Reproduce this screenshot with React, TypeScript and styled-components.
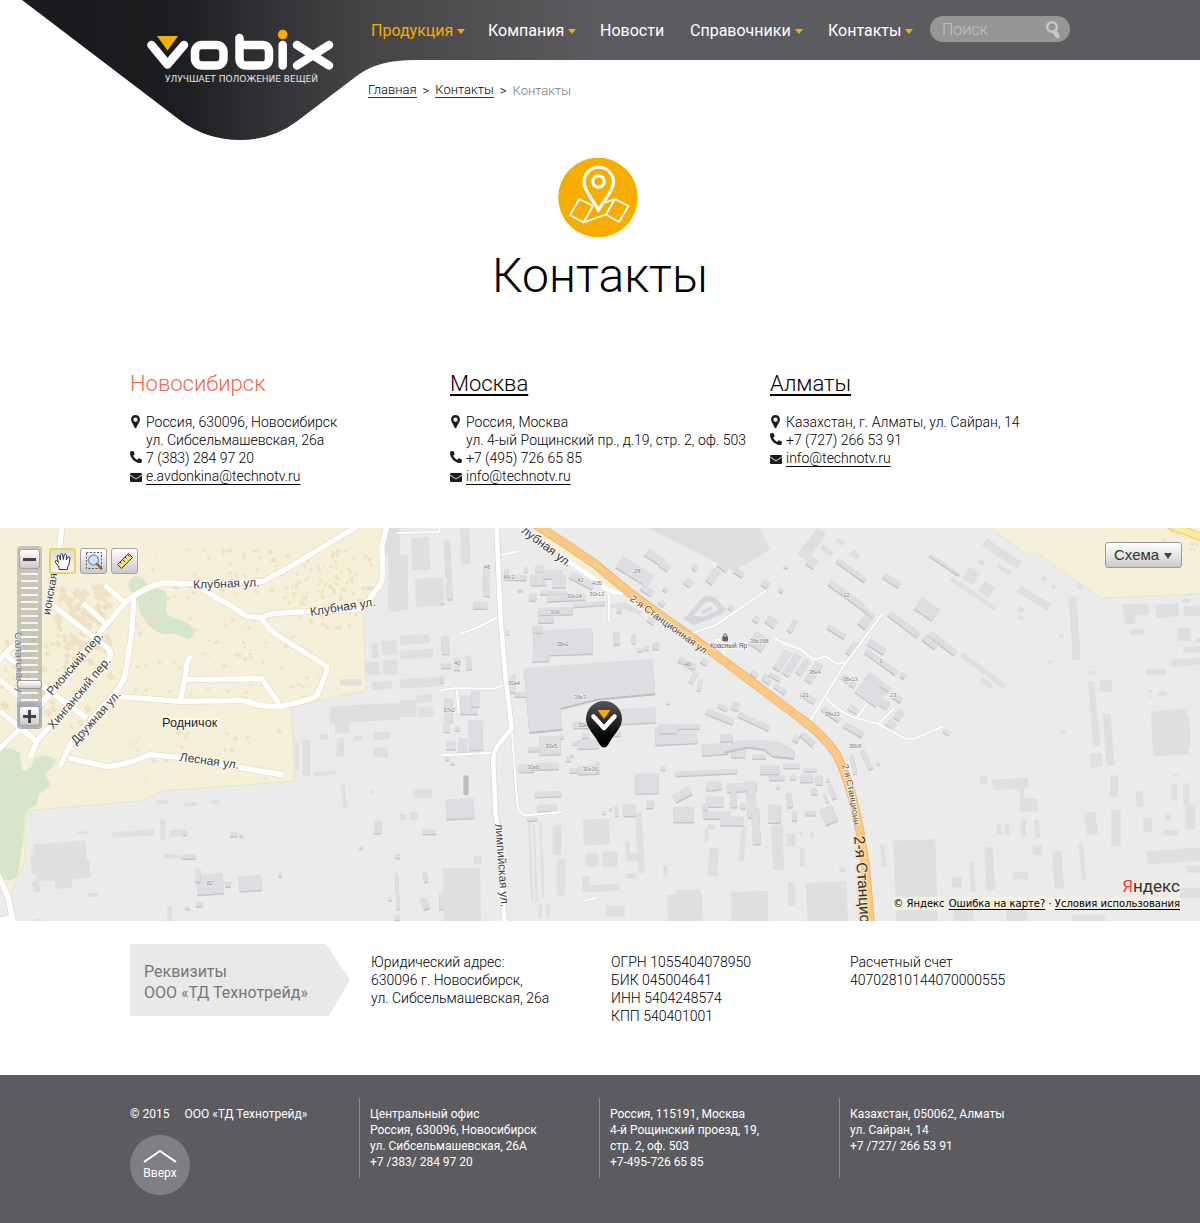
import React from "react";
import styled, { createGlobalStyle } from "styled-components";
import { FaPhoneAlt } from "react-icons/fa";

const GlobalStyle = createGlobalStyle`
  *, *::before, *::after { box-sizing: border-box; }
  body { margin: 0; background: #fff; color: #000; font: 300 14px/18px Roboto, "Liberation Sans", sans-serif; }
  a { color: inherit; text-decoration: none; }
  h1, h2, p, ul, ol { margin: 0; padding: 0; font-weight: inherit; }
  ul, ol { list-style: none; }
  button, input, select { font: inherit; color: inherit; margin: 0; }
`;

const Container = styled.div`
  width: 100%;
  max-width: 940px;
  margin: 0 auto;
`;

/* ---------- header ---------- */

const Header = styled.header`
  position: relative;
  background: linear-gradient(to right, transparent 50%, #5c5b5f 50%) top / 100% 60px no-repeat;
`;

const HeaderShape = styled.svg`
  position: absolute;
  top: 0;
  left: calc(50% - 600px);
  display: block;
`;

const HeaderRow = styled(Container)`
  position: relative;
  display: flex;
  height: 60px;
`;

const LogoLink = styled.a`
  flex: 0 0 241px;
  padding: 28px 0 0 16px;
  height: 60px;
`;

const Nav = styled.nav`
  flex: 1;
  padding-top: 21px;
`;

const NavList = styled.ul`
  display: grid;
  grid-template-columns: 117px 112px 90px 138px auto;
`;

const NavLink = styled.a<{ $active?: boolean }>`
  display: inline-flex;
  align-items: center;
  gap: 4px;
  font-size: 16px;
  font-weight: 400;
  line-height: 20px;
  color: ${(p) => (p.$active ? "#f7ac00" : "#fff")};
`;

const Caret = styled.span`
  border: 4px solid transparent;
  border-top: 5px solid #f7ac00;
  border-bottom: 0;
`;

const SearchForm = styled.form`
  display: flex;
  align-items: center;
  width: 140px;
  height: 26px;
  margin-top: 16px;
  padding: 1px 8px 0 12px;
  border-radius: 13px;
  background: #969696;
`;

const SearchInput = styled.input`
  flex: 1;
  min-width: 0;
  padding: 0;
  border: 0;
  outline: 0;
  background: none;
  font-size: 16px;
  line-height: 20px;
  color: #fff;
  &::placeholder { color: #c2c2c2; opacity: 1; }
`;

const SearchButton = styled.button`
  display: flex;
  padding: 0;
  border: 0;
  background: none;
`;

const Crumbs = styled.ol`
  display: flex;
  gap: 6px;
  padding: 23px 0 0 238px;
  font-size: 13px;
  line-height: 15px;
`;

const CrumbLink = styled.a`
  display: block;
  border-bottom: 1px solid #333;
  line-height: 14px;
`;

const Crumb = styled.li<{ $muted?: boolean }>`
  color: ${(p) => (p.$muted ? "#777" : "#000")};
`;

/* ---------- title and offices ---------- */

const TitleBlock = styled.section`
  display: flex;
  flex-direction: column;
  align-items: center;
  padding-top: 60px;
`;

const TitleIcon = styled.svg`
  display: block;
  margin-right: 4px;
`;

const Title = styled.h1`
  margin-top: 8px;
  font-size: 48px;
  line-height: 60px;
`;

const Offices = styled(Container)`
  display: grid;
  grid-template-columns: repeat(3, 320px);
  padding: 64px 0 43px;
`;

const City = styled.h2<{ $current?: boolean }>`
  margin-bottom: 15px;
  font-size: 22px;
  line-height: 28px;
  color: ${(p) => (p.$current ? "#f0664e" : "#000")};
`;

const CityLink = styled.a`
  text-decoration: underline;
  text-decoration-thickness: 2px;
  text-underline-offset: 3px;
  text-decoration-skip-ink: none;
`;

const ContactRow = styled.p`
  display: grid;
  grid-template-columns: 16px auto;
  line-height: 18px;
`;

const ContactIcon = styled.span`
  display: flex;
  align-items: flex-start;
  padding-top: 2px;
  color: #1b1b20;
`;

const Underlined = styled.a`
  justify-self: start;
  text-decoration: underline;
  text-underline-offset: 3px;
  text-decoration-skip-ink: none;
`;

/* ---------- map ---------- */

const MapBox = styled.section`
  position: relative;
  height: 393px;
  overflow: hidden;
  background: #ebebeb;
`;

const MapSvg = styled.svg`
  display: block;
  width: 100%;
  height: 100%;
  font-family: "Liberation Sans", Arial, sans-serif;
  font-weight: 400;
`;

const Pin = styled.svg`
  position: absolute;
  left: calc(50% - 14px);
  top: 173px;
`;

const ZoomBar = styled.div`
  position: absolute;
  left: 17px;
  top: 18px;
  display: flex;
  flex-direction: column;
  align-items: center;
  justify-content: space-between;
  width: 25px;
  height: 183px;
  padding: 3px 0;
  border-radius: 4px;
  background: linear-gradient(rgba(150, 155, 150, 0.5) 85%, rgba(125, 140, 165, 0.62) 85%);
`;

const ToolButton = styled.button<{ $small?: boolean; $on?: boolean }>`
  display: flex;
  align-items: center;
  justify-content: center;
  width: ${(p) => (p.$small ? 21 : 27)}px;
  height: ${(p) => (p.$small ? 20 : 26)}px;
  padding: 0;
  border: ${(p) => (p.$on ? "2px solid #f2cf63" : "1px solid #a2a2a2")};
  border-radius: 3px;
  background: ${(p) => (p.$on ? "linear-gradient(#dcdcdc, #f8f8f8)" : "linear-gradient(#fff, #c9c9c9)")};
`;

const ZoomRange = styled.input`
  appearance: none;
  writing-mode: vertical-lr;
  width: 25px;
  height: 133px;
  background: repeating-linear-gradient(to bottom, transparent 0 2px, #f4f5f3 2px 4px, transparent 4px 7px) center / 17px 100% no-repeat;
  &::-webkit-slider-thumb {
    appearance: none;
    width: 25px;
    height: 9px;
    border: 1px solid #999;
    border-radius: 3px;
    background: linear-gradient(#fff, #ccc);
  }
`;

const Tools = styled.div`
  position: absolute;
  left: 49px;
  top: 20px;
  display: flex;
  gap: 4px;
`;

const LayerPicker = styled.label`
  position: absolute;
  right: 18px;
  top: 14px;
  display: flex;
  align-items: center;
  width: 77px;
  height: 26px;
  border: 1px solid #999;
  border-radius: 3px;
  background: linear-gradient(#fff, #ccc);
`;

const LayerSelect = styled.select`
  appearance: none;
  width: 100%;
  padding: 0 0 0 8px;
  border: 0;
  outline: 0;
  background: none;
  font: 15px/22px "Liberation Sans", Arial, sans-serif;
  color: #333;
`;

const LayerCaret = styled.span`
  position: absolute;
  right: 9px;
  top: 10px;
  border: 4px solid transparent;
  border-top: 6px solid #444;
  border-bottom: 0;
  pointer-events: none;
`;

const MapCredits = styled.div`
  position: absolute;
  right: 20px;
  bottom: 11px;
  display: flex;
  flex-direction: column;
  align-items: flex-end;
  font: 10px/13px "DejaVu Sans", Verdana, sans-serif;
`;

const Yandex = styled.a`
  font: 400 17px/22px Roboto, "Liberation Sans", sans-serif;
  color: #333;
  text-shadow: 0 0 6px #f7efd0, 0 0 6px #f7efd0;
`;

const RedLetter = styled.span`
  color: #f33;
`;

const CreditLine = styled.p`
  display: flex;
  gap: 4px;
  a { text-decoration: underline; text-underline-offset: 2px; }
`;

const CreditText = styled.span`
  background: #f3f0e4;
`;

/* ---------- requisites and footer ---------- */

const Requisites = styled(Container)`
  display: grid;
  grid-template-columns: 241px 240px 239px auto;
  padding: 23px 0 50px;
`;

const ArrowLabel = styled.h2`
  width: 220px;
  height: 72px;
  padding: 17px 0 0 14px;
  background: #e9e9e9;
  clip-path: polygon(0 0, 196px 0, 220px 36px, 199px 100%, 0 100%);
  font-size: 16px;
  font-weight: 400;
  line-height: 21px;
  color: #777;
`;

const RequisiteText = styled.p`
  padding-top: 9px;
`;

const Footer = styled.footer`
  background: #5c5b5f;
  color: #fff;
  font-size: 12px;
  font-weight: 400;
  line-height: 16px;
`;

const FooterGrid = styled(Container)`
  display: grid;
  grid-template-columns: 229px 240px 240px auto;
  padding: 23px 0 28px;
`;

const FooterColumn = styled.div`
  height: 80px;
  padding: 8px 0 0 10px;
  border-left: 1px solid #8b8a8e;
`;

const Copyright = styled.p`
  display: flex;
  gap: 15px;
  padding-top: 8px;
`;

const UpLink = styled.a`
  display: flex;
  flex-direction: column;
  align-items: center;
  width: 60px;
  height: 60px;
  margin-top: 13px;
  padding-top: 14px;
  border-radius: 50%;
  background: #7f7e82;
`;

/* ---------- map drawing ---------- */

type Box = [number, number, number, number, number?];

const turn = ([x, y, w, h, r = 0]: Box) => (r ? `rotate(${r} ${x + w / 2} ${y + h / 2})` : undefined);

const Flat = ({ items }: { items: Box[] }) => (
  <g fill="#dfdfdf">
    {items.map((b, i) => (
      <rect key={i} x={b[0]} y={b[1]} width={b[2]} height={b[3]} transform={turn(b)} />
    ))}
  </g>
);

const Raised = ({ items }: { items: Box[] }) => (
  <g>
    {items.map((b, i) => (
      <g key={i}>
        <rect x={b[0]} y={b[1] + 4} width={b[2]} height={b[3]} transform={turn(b)} fill="#c2c2c8" />
        <rect x={b[0]} y={b[1]} width={b[2]} height={b[3]} transform={turn(b)} fill="#dddde2" />
      </g>
    ))}
  </g>
);

const westFlat: Box[] = [
  [105, 943, 155, 110, -4], [93, 980, 30, 60], [120, 1000, 150, 55, -4], [98, 1060, 22, 34, -8], [165, 1056, 50, 26, -6],
  [337, 908, 125, 18, -4], [480, 875, 16, 62], [510, 906, 40, 20, -5], [490, 980, 60, 12, 4], [470, 816, 34, 12],
  [552, 824, 38, 12, -6], [634, 816, 24, 12], [262, 1095, 32, 12], [232, 910, 28, 8], [502, 1136, 14, 43], [1020, 454, 66, 18],
  [1115, 346, 20, 44, -5], [1145, 338, 46, 42, -5], [1095, 402, 44, 38, -5], [1148, 395, 44, 44, -5], [1115, 460, 60, 24, -4],
  [990, 530, 210, 50, -3], [1005, 570, 45, 46], [1120, 612, 50, 22, -4], [1010, 630, 22, 56], [1122, 658, 42, 30],
  [908, 636, 22, 108], [884, 645, 12, 80], [944, 730, 66, 12, -4], [1026, 770, 12, 70, -6], [1150, 0, 50, 80], [1165, 60, 35, 190],
  [1100, 175, 20, 12], [960, 620, 24, 14], [1062, 625, 24, 14], [1112, 786, 10, 12], [103, 1172, 22, 8],
];
const westRaised: Box[] = [
  [590, 1038, 80, 60, -4], [585, 1022, 16, 40], [676, 1060, 16, 16], [716, 1042, 68, 46, -4], [548, 978, 38, 14], [690, 911, 22, 14],
  [718, 918, 11, 8], [548, 903, 12, 18], [836, 1030, 10, 16], [588, 1123, 20, 12], [556, 1135, 14, 8], [1122, 878, 22, 38],
  [1184, 978, 16, 12], [1078, 954, 10, 8], [1187, 1034, 10, 110, -3], [1164, 1107, 12, 10], [1182, 1160, 18, 16],
];
const midFlat: Box[] = [
  [35, 28, 54, 98, -2], [46, 150, 86, 85, -3], [182, 0, 28, 108, -2], [0, 80, 24, 164], [0, 320, 90, 28, -4], [0, 365, 100, 26, -3],
  [0, 450, 125, 28, -3], [0, 515, 50, 52], [50, 500, 46, 24], [55, 535, 45, 32], [40, 784, 56, 28], [130, 1020, 112, 160, -1],
  [222, 984, 24, 24], [30, 853, 22, 22], [0, 858, 18, 18], [388, 880, 8, 238, -2], [402, 890, 7, 230, -2], [422, 880, 7, 230, -2],
  [458, 890, 26, 90], [472, 992, 24, 110], [550, 873, 78, 78, -2], [556, 975, 40, 40], [608, 970, 44, 46], [560, 1070, 98, 20, -3],
  [548, 1045, 20, 44], [710, 855, 20, 180, -3], [676, 940, 14, 44], [680, 975, 34, 24], [680, 1036, 30, 16], [802, 1098, 105, 82, -3],
  [830, 1084, 70, 16], [994, 1090, 110, 90, -1], [914, 898, 10, 44], [922, 890, 24, 16], [926, 960, 28, 84, 4], [1020, 892, 16, 110, 6],
  [1060, 840, 18, 110], [1116, 890, 34, 136, -2], [618, 1132, 56, 34], [1164, 1064, 20, 70], [1160, 916, 26, 40], [886, 20, 60, 14, 36],
  [848, 20, 50, 14, 36], [830, 34, 60, 14, 36], [880, 60, 60, 14, 36], [416, 1126, 10, 44], [440, 1130, 8, 36], [790, 1012, 12, 34],
];
const midRaised: Box[] = [
  [136, 38, 18, 176, -3], [250, 110, 20, 94], [220, 222, 42, 20], [124, 324, 24, 54, -3], [124, 404, 30, 16], [162, 390, 18, 36],
  [198, 382, 16, 42, -4], [122, 442, 10, 22], [122, 220, 9, 8], [180, 502, 54, 56], [214, 488, 24, 48], [132, 510, 26, 72], [206, 576, 42, 90, -2],
  [174, 630, 28, 44], [138, 640, 28, 24], [130, 582, 20, 30], [165, 596, 14, 12], [138, 812, 84, 60, -2], [68, 904, 40, 14], [70, 1032, 12, 30, -10],
  [64, 1110, 20, 34, -20], [118, 1094, 12, 50], [136, 686, 12, 10], [150, 700, 14, 10], [312, 124, 14, 30], [325, 140, 54, 16],
  [354, 182, 14, 8], [388, 196, 22, 22, 6], [372, 116, 10, 16], [392, 140, 46, 32], [406, 112, 24, 20], [430, 124, 55, 28], [456, 140, 42, 38],
  [420, 188, 80, 12], [440, 200, 116, 18, -2], [520, 222, 95, 12, -4], [414, 238, 104, 22, -2], [415, 266, 46, 18], [508, 148, 78, 20, 28],
  [318, 306, 10, 14], [400, 304, 178, 76, -2], [398, 292, 30, 22], [396, 380, 52, 20, -2], [640, 310, 18, 40, -3], [694, 318, 12, 28], [712, 360, 16, 10],
  [732, 352, 14, 14], [758, 342, 18, 22], [332, 440, 16, 54], [344, 492, 34, 14], [520, 580, 46, 20], [546, 616, 24, 14],
  [532, 634, 64, 28, -2], [518, 640, 14, 10], [640, 610, 22, 14], [418, 624, 64, 56, -2], [384, 656, 34, 14], [480, 620, 10, 12], [356, 710, 46, 22],
  [392, 704, 84, 20, -2], [508, 720, 26, 14], [534, 712, 64, 26, -2], [588, 700, 8, 30], [498, 684, 14, 16], [512, 678, 10, 8], [404, 790, 80, 16, -2],
  [412, 830, 58, 20, -2], [382, 868, 30, 10], [706, 736, 70, 60, -1], [782, 714, 14, 12], [738, 818, 22, 22], [670, 828, 36, 36], [644, 834, 10, 30, -6],
  [606, 850, 10, 8], [628, 840, 8, 6], [660, 540, 106, 34, -3], [660, 572, 108, 14, -3], [765, 596, 126, 52, -3], [776, 588, 56, 28],
  [836, 588, 64, 14], [905, 646, 78, 34, -4], [960, 618, 38, 22], [994, 664, 42, 24], [1056, 680, 42, 12], [826, 726, 184, 14, -3],
  [1080, 712, 58, 26], [1150, 706, 50, 14], [1108, 742, 46, 14], [1170, 740, 18, 14], [1130, 770, 8, 12], [1160, 794, 16, 44, -6], [1176, 848, 14, 30],
  [918, 760, 46, 26, -6], [918, 806, 52, 30], [980, 764, 90, 26, -3], [992, 780, 18, 58], [1040, 758, 28, 110, -3], [818, 786, 56, 26, -28], [820, 836, 62, 46],
  [910, 850, 78, 22], [960, 866, 70, 26], [908, 826, 16, 20], [1022, 824, 14, 18], [1104, 830, 38, 54], [1056, 850, 24, 98, -3],
  [650, 110, 110, 40, 32], [736, 76, 60, 24, 32], [780, 104, 30, 20, 32], [722, 178, 40, 18, 32], [776, 218, 20, 14, 32],
  [744, 270, 22, 16, 36], [652, 240, 14, 14, 20], [790, 178, 14, 12, 32], [878, 110, 16, 16, 36], [856, 152, 22, 22, 36], [928, 122, 24, 46, 34], [952, 110, 34, 14, 36],
  [1002, 126, 32, 16, 32], [1088, 158, 20, 20, 32], [1150, 112, 14, 8], [1138, 180, 12, 12, 30], [986, 232, 14, 14, 30], [1060, 266, 18, 16, 32],
  [1100, 268, 32, 26, 36], [1170, 274, 16, 40, 32], [1054, 318, 46, 44, 32], [1136, 364, 24, 66, 34], [1164, 374, 24, 72, 34],
  [834, 398, 56, 16, 28], [904, 394, 22, 16, 32], [874, 430, 16, 36, 28], [894, 454, 12, 34, 12], [800, 520, 10, 8], [1052, 430, 24, 14, 34],
  [1090, 440, 20, 14, 34], [1106, 440, 40, 12, 34], [1088, 450, 28, 14, 34], [1122, 476, 40, 14, 34], [916, 556, 88, 18, 22], [954, 530, 30, 14, 26],
  [996, 522, 24, 24, 20], [1012, 572, 102, 16, 25], [1182, 620, 18, 22, 30],
];
const eastFlat: Box[] = [
  [18, 0, 34, 100, 36], [60, 60, 40, 16, 36], [108, 34, 26, 14, 32], [152, 70, 26, 20, 36], [542, 64, 128, 26, 34], [590, 118, 44, 14, 34],
  [495, 122, 38, 42, 36], [535, 96, 18, 14, 30], [540, 166, 38, 36, 36], [648, 198, 106, 24, 32], [724, 146, 16, 14, 30], [755, 170, 12, 12, 30],
  [834, 170, 14, 14, 30], [654, 236, 18, 18, 30], [654, 264, 16, 12, 30], [440, 190, 160, 14, 34], [812, 206, 24, 190, -4], [778, 320, 10, 10],
  [968, 228, 78, 34, -2], [976, 260, 30, 28], [988, 304, 46, 16, -4], [1068, 228, 68, 40, -3], [1152, 234, 48, 30, -3], [1146, 212, 24, 12],
  [1132, 300, 40, 40], [1188, 330, 12, 14], [1150, 356, 50, 18], [1114, 392, 86, 22, -4], [1038, 424, 60, 16], [864, 428, 22, 12], [872, 460, 20, 192, -5],
  [900, 456, 36, 34, 4], [914, 558, 24, 156, -4], [1056, 546, 108, 136, -3], [1100, 570, 70, 90, -3], [870, 676, 36, 42, -3], [782, 608, 14, 8],
  [744, 398, 12, 8], [1075, 492, 26, 10], [1044, 486, 10, 8], [1046, 502, 8, 6], [470, 420, 160, 16, 37], [540, 456, 38, 18, 37], [930, 742, 24, 66],
  [540, 744, 22, 24], [578, 752, 106, 32, -3], [660, 780, 12, 70], [664, 812, 48, 38], [590, 888, 14, 32, -4], [614, 888, 14, 32, -6], [664, 872, 14, 54],
  [704, 876, 14, 54, -4], [856, 852, 34, 68, -8], [934, 844, 28, 112], [1008, 790, 22, 46, -4], [1114, 768, 18, 46], [1150, 766, 18, 64], [1156, 830, 30, 74],
  [1030, 870, 26, 42, -6], [1098, 858, 12, 22], [1090, 906, 44, 16], [1120, 738, 14, 8], [698, 952, 28, 28], [556, 956, 26, 132, -3], [640, 1032, 44, 22, -3],
  [760, 970, 28, 112, -4], [840, 946, 14, 112, -5], [510, 1002, 14, 90, -4], [456, 1048, 30, 30], [1040, 964, 160, 40, -4], [1160, 1012, 40, 22], [1140, 1080, 60, 30],
  [284, 936, 126, 245, -2], [242, 950, 14, 66, -4], [118, 1018, 18, 14], [20, 1062, 122, 120, -2], [0, 960, 14, 56], [30, 910, 10, 20], [0, 910, 6, 16],
  [460, 1120, 60, 60], [816, 1160, 100, 19], [620, 1130, 60, 50],
];
const eastRaised: Box[] = [
  [24, 88, 26, 30, 34], [102, 120, 106, 14, 36], [78, 190, 122, 18, 36], [182, 246, 46, 12, 40], [182, 264, 28, 36, 38], [248, 148, 56, 18, 32],
  [350, 222, 64, 42, 34], [258, 280, 110, 18, 37], [378, 336, 100, 18, 37], [368, 334, 46, 18, 37], [380, 106, 108, 8, 34], [80, 304, 60, 14, 32],
  [148, 340, 18, 42, 34], [202, 346, 58, 20, 32], [188, 394, 114, 16, 36], [302, 436, 16, 14, 30], [180, 448, 78, 74, 36], [240, 470, 34, 14, 36],
  [280, 502, 28, 16, 34], [242, 516, 26, 24, 34], [30, 400, 24, 66, 34], [126, 446, 24, 14, 40], [150, 460, 18, 16, 34], [0, 500, 50, 16, 34], [62, 552, 64, 14, 36],
  [146, 534, 30, 18, 30], [130, 596, 64, 18, 30], [288, 546, 20, 30, 34], [262, 576, 24, 24, 40], [430, 606, 22, 12, 32], [154, 680, 12, 58, -10],
  [190, 662, 16, 64, -26], [232, 702, 10, 8, 30], [0, 624, 50, 18, 42], [10, 720, 40, 10], [0, 738, 40, 24], [46, 742, 22, 28], [78, 750, 12, 10],
  [34, 780, 18, 20], [72, 796, 10, 28, -20], [88, 768, 14, 46, -20], [16, 848, 30, 14], [66, 836, 40, 50, -22], [0, 392, 20, 50, 36],
];

/* small deterministic generator for garden houses */
const makeHouses = (count: number, x0: number, y0: number, w: number, h: number, size: number, angle: number, seed: number): Box[] => {
  let s = seed;
  const next = () => {
    s = (s * 16807) % 2147483647;
    return s / 2147483647;
  };
  return Array.from({ length: count }, () => {
    const a = size * (0.6 + next() * 0.8);
    return [x0 + next() * w, y0 + next() * h, a, a * 0.8, angle + next() * 10] as Box;
  });
};

const houses: Box[] = [
  ...makeHouses(90, 160, 170, 160, 180, 17, 40, 11),
  ...makeHouses(80, 0, 320, 330, 280, 16, 40, 29),
  ...makeHouses(80, 450, 60, 600, 150, 10, 10, 47),
  ...makeHouses(60, 850, 60, 280, 240, 10, 70, 71),
  ...makeHouses(70, 400, 260, 600, 250, 10, 10, 83),
  ...makeHouses(22, 380, 590, 480, 180, 11, 30, 97),
  ...makeHouses(24, 3400, 0, 200, 70, 10, 20, 13),
];

const streets = [
  "M186 -5L178 60L160 150",
  "M1080 -10L960 62L860 122L790 160L620 168L490 165Q450 172 400 205Q375 220 320 290L120 530",
  "M400 200Q402 260 390 350L375 440Q365 475 340 500L215 640L180 715",
  "M610 185Q640 205 680 225L740 265L785 270Q800 300 830 320L980 415Q985 425 950 505Q900 525 840 535Q800 537 770 530Q740 515 700 518L540 520L350 505",
  "M785 270Q800 258 830 256L930 250L1088 244L1125 190Q1145 170 1148 140L1146 50L1160 -5",
  "M540 520L555 450L562 400L573 382M560 455L785 452L838 528",
  "M315 172L375 225M248 225L318 287M155 230L320 358Q340 375 325 395L110 640L90 690",
  "M0 455L60 508M130 475L260 570M0 550L110 640M-5 400L70 320M10 375L60 415M-5 665L58 605M95 560L180 465",
  "M205 690L320 716Q375 712 450 680L540 688L850 741",
  "M-5 1040L25 1110L40 1190M-5 1178L40 1168",
];
const avenues = "M1490 -5L1495 120L1502 280L1518 460L1535 600L1492 655Q1478 675 1480 710L1487 860L1493 900L1514 1190";
const lanes = [
  "M1535 600L1552 830Q1556 862 1580 862L1685 852",
  "M1382 317L1430 300L1498 265M1322 487L1370 480L1480 482L1518 470M1370 484L1377 560M1324 682L1480 674M1504 80L1556 70",
  "M2070 318L2150 290L2300 186M2130 360L2150 335L2170 340L2172 390M2325 330Q2340 345 2400 362L2442 395L2478 385L2510 408L2540 402",
  "M2646 258L2530 415L2475 505L2430 580M2475 505Q2500 540 2560 568L2635 588L2715 632L2745 632L2830 595M2570 570L2600 530M2635 588L2685 538",
  "M1826 196L1827 280M1190 15L1316 12L1320 -5M1750 1118L1790 1110",
];
const highway = "M1600 -15L1700 50L1785 108L1890 195L2000 275L2120 360L2300 495L2400 570Q2470 620 2510 680Q2540 740 2560 820L2580 910L2596 1010L2612 1190";

type Label = { t: string; x: number; y: number; r?: number; s?: number; c?: string };
const labels: Label[] = [
  { t: "Клубная ул.", x: 580, y: 182, r: -2 },
  { t: "Клубная ул.", x: 932, y: 264, r: -9 },
  { t: "Рионский пер.", x: 156, y: 504, r: -49 },
  { t: "Хинганский пер.", x: 160, y: 606, r: -50 },
  { t: "Дружная ул.", x: 228, y: 652, r: -48 },
  { t: "Лесная ул.", x: 538, y: 698, r: 8 },
  { t: "ионская", x: 150, y: 262, r: -80, s: 34 },
  { t: "Салатская у", x: 44, y: 312, r: 88, s: 32, c: "#667" },
  { t: "лубная ул.", x: 1562, y: 12, r: 37 },
  { t: "2-я Станционная ул.", x: 1888, y: 216, r: 36, s: 30, c: "#554a3c" },
  { t: "лимпийская ул.", x: 1486, y: 888, r: 86, s: 35 },
];
const tiny: [string, number, number][] = [
  ["46", 1452, 122], ["46/1", 1510, 154], ["30к14", 1700, 210], ["30к12", 1768, 205], ["30А", 1650, 258], ["38к2", 1670, 354],
  ["38к3", 1722, 512], ["30к4", 1524, 470], ["37к2", 1330, 552], ["30к5", 1636, 660], ["30к6", 1582, 722], ["30к16", 1748, 730],
  ["28", 1902, 136], ["42", 1732, 162], ["40Б", 1776, 172], ["40", 1362, 410], ["40", 2054, 415], ["38к16В", 2250, 344], ["12", 2530, 208],
  ["1", 2638, 404], ["38к4", 2426, 438], ["38к13", 2528, 460], ["23", 2670, 506], ["21", 2408, 508], ["38к10", 2474, 565], ["38К8", 2546, 661],
  ["82", 620, 1070], ["30к", 1734, 596],
];

const bigHall = "M388 612L372 420L758 392L766 496L592 512L482 540L487 602Z";

const MapDrawing = () => (
  <MapSvg viewBox="0 0 3600 1179" preserveAspectRatio="xMidYMid slice" role="img" aria-label="Схема проезда">
    <defs>
      <clipPath id="town">
        <path d="M0 0H1150L1138 160L1090 240L1098 487L875 535L883 760L490 788L75 848L0 660ZM3400 0H3600V70H3490Z" />
      </clipPath>
      <path id="station" d="M2526 712Q2550 790 2562 905" />
      <path id="stationBig" d="M2562 926Q2574 1040 2584 1260" />
    </defs>
    <rect width="3600" height="1179" fill="#ebebeb" />
    <g fill="#f7f0d9" stroke="#e2dcc6" strokeWidth="2">
      <path d="M-5 -5H1160L1138 160L1090 240L1098 487L875 535L883 760L490 788L425 818L75 848V1000L30 1105L-5 1010Z" />
      <path d="M2965 -5L3078 77L3110 75L3305 210L3605 197V-5Z" />
      <path d="M1610 -5L1700 50L1785 108L1870 190L1830 188L1700 98L1590 20Z" />
    </g>
    <g fill="#d5e6cd">
      <path d="M0 658Q50 660 62 680Q58 720 75 730Q95 725 105 690Q140 675 168 695Q165 715 135 740L150 770Q140 785 115 800L110 830L75 850L70 940L52 1045Q35 1065 0 1050Z" />
      <path d="M385 175Q385 145 412 144Q435 150 445 178Q500 180 503 210L498 250Q510 275 530 272Q580 285 585 312Q575 338 560 333Q530 312 500 320Q470 318 440 285Q415 255 415 225Z" />
    </g>
    <path d="M462 268L482 262L480 285L466 280Z" fill="#ecdfc8" />
    <g clipPath="url(#town)" fill="#efe1c3">
      {houses.map((b, i) => (
        <rect key={i} x={b[0]} y={b[1]} width={b[2]} height={b[3]} transform={turn(b)} />
      ))}
    </g>
    <Flat items={westFlat} />
    <Raised items={westRaised} />
    <g transform="translate(1200 0)">
      <path d="M745 0L1000 130L1110 65L1080 0Z" fill="#dfdfdf" />
      <Flat items={midFlat} />
      <Raised items={midRaised} />
      <path d={bigHall} transform="translate(0 6)" fill="#bdbdc4" />
      <path d={bigHall} fill="#dddde2" />
      <path d="M852 272L912 205L945 207L978 245L960 262L880 292Z M880 262L912 266L955 244L935 222L915 224Z" fill="#d6d6dc" fillRule="evenodd" />
      <path d="M902 250L935 235L940 244L908 258Z" fill="#d6d6dc" />
      <path d="M632 230L670 222L724 250L724 264L676 244L632 240Z" fill="#dddde2" />
      <path d="M970 678L1000 646L1060 640L1140 648L1185 674L1182 696L1120 690L1090 668L1040 662Z" fill="#c2c2c8" />
      <path d="M970 672L1000 640L1060 634L1140 642L1185 668L1182 690L1120 684L1090 662L1040 656Z" fill="#dddde2" />
      <rect x="190" y="742" width="16" height="60" rx="7" fill="#bdbdc4" />
    </g>
    <g transform="translate(2400 0)">
      <Flat items={eastFlat} />
      <Raised items={eastRaised} />
    </g>
    <g fill="none" strokeLinejoin="round">
      {lanes.map((d) => <path key={d} d={d} stroke="#dadada" strokeWidth="9" />)}
      {lanes.map((d) => <path key={d} d={d} stroke="#fff" strokeWidth="6" />)}
      {streets.map((d) => <path key={d} d={d} stroke="#e3dccb" strokeWidth="20" />)}
      {streets.map((d) => <path key={d} d={d} stroke="#fff" strokeWidth="16" />)}
      <path d="M1690 90L1800 165Q1830 200 1870 192" stroke="#fff" strokeWidth="12" />
      <path d={avenues} stroke="#d6d6d6" strokeWidth="18" />
      <path d={avenues} stroke="#fff" strokeWidth="14" />
      <path d={highway} stroke="#e3b579" strokeWidth="27" />
      <path d={highway} stroke="#fdc881" strokeWidth="22" />
      <path d="M3505 -10L3610 30" stroke="#e2c96a" strokeWidth="24" />
      <path d="M3505 -10L3610 30" stroke="#ffec97" strokeWidth="19" />
    </g>
    <g paintOrder="stroke" stroke="#fff" strokeOpacity="0.8" strokeWidth="5">
      {tiny.map(([t, x, y]) => (
        <text key={`${t}${x}`} x={x} y={y} fontSize="17" fill="#77776c" strokeWidth="3">{t}</text>
      ))}
      {labels.map((l) => (
        <text key={`${l.t}${l.x}`} x={l.x} y={l.y} fontSize={l.s ?? 36} fill={l.c ?? "#3a3a3a"} transform={`rotate(${l.r ?? 0} ${l.x} ${l.y})`}>
          {l.t}
        </text>
      ))}
      <text x="486" y="597" fontSize="38" fill="#1c1c1c" strokeWidth="8">Родничок</text>
      <text x="2130" y="360" fontSize="20" fill="#554a48">Красный Яр</text>
      <text fontSize="27" fill="#554a3c"><textPath href="#station">2-я Станционн</textPath></text>
      <text fontSize="46" fill="#333" stroke="#fbe3bb" strokeWidth="8"><textPath href="#stationBig">2-я Станцио</textPath></text>
    </g>
    <rect x="2167" y="325" width="17" height="15" rx="2" fill="#6b5a52" />
    <path d="M2171 326v-4a4 4 0 0 1 9 0v4" fill="none" stroke="#6b5a52" strokeWidth="3" />
  </MapSvg>
);

/* ---------- small drawings ---------- */

const LogoDrawing = () => (
  <svg width="190" height="60" viewBox="146 28 190 60" role="img" aria-label="Vobix">
    <g fill="none" stroke="#fff" strokeWidth="8.500" strokeLinecap="round" strokeLinejoin="round">
      <path d="M151.500 45L167.500 64.500L184 45" />
      <rect x="195" y="45" width="28.500" height="20.500" rx="7" />
      <path d="M239.500 38V58.500Q239.500 65.500 246.500 65.500H262Q269 65.500 269 58.500V52Q269 45 262 45H240" />
      <path d="M282.700 45V65.500M297 45L329 65.500M329 45L297 65.500" />
    </g>
    <path d="M157 36H178L167.500 50.500Z" fill="#f7ac00" />
    <circle cx="282.700" cy="34.500" r="4.800" fill="#f7ac00" />
    <text x="165" y="82" fontFamily="DejaVu Sans, Verdana, sans-serif" fontSize="9" fontWeight="400" fill="#e8e8e8">УЛУЧШАЕТ ПОЛОЖЕНИЕ ВЕЩЕЙ</text>
  </svg>
);

const PinIcon = () => (
  <svg width="11" height="14" viewBox="0 0 11 14" aria-hidden="true">
    <path d="M5.500 0A4.500 4.500 0 0 0 1 4.500C1 7 3.500 9 4.500 12.500Q5.500 14 6.500 12.500C7.500 9 10 7 10 4.500A4.500 4.500 0 0 0 5.500 0Zm0 2.400a2.200 2.200 0 1 1 0 4.400 2.200 2.200 0 0 1 0-4.400Z" fill="currentColor" fillRule="evenodd" />
  </svg>
);

const MailIcon = () => (
  <svg width="12" height="14" viewBox="0 0 12 14" aria-hidden="true">
    <rect y="4" width="12" height="9" rx="1" fill="currentColor" />
    <path d="M0 6L6 10L12 6" fill="none" stroke="#fff" strokeWidth="0.900" />
  </svg>
);

const navItems = [
  { text: "Продукция", menu: true, active: true },
  { text: "Компания", menu: true },
  { text: "Новости" },
  { text: "Справочники", menu: true },
  { text: "Контакты", menu: true },
];

const offices = [
  { city: "Новосибирск", current: true, address: ["Россия, 630096, Новосибирск", "ул. Сибсельмашевская, 26а"], phone: "7 (383) 284 97 20", mail: "e.avdonkina@technotv.ru" },
  { city: "Москва", address: ["Россия, Москва", "ул. 4-ый Рощинский пр., д.19, стр. 2, оф. 503"], phone: "+7 (495) 726 65 85", mail: "info@technotv.ru" },
  { city: "Алматы", address: ["Казахстан, г. Алматы, ул. Сайран, 14"], phone: "+7 (727) 266 53 91", mail: "info@technotv.ru" },
];

const requisites = [
  ["Юридический адрес:", "630096 г. Новосибирск,", "ул. Сибсельмашевская, 26а"],
  ["ОГРН 1055404078950", "БИК 045004641", "ИНН 5404248574", "КПП 540401001"],
  ["Расчетный счет", "40702810144070000555"],
];

const footerColumns = [
  ["Центральный офис", "Россия, 630096, Новосибирск", "ул. Сибсельмашевская, 26А", "+7 /383/ 284 97 20"],
  ["Россия, 115191, Москва", "4-й Рощинский проезд, 19,", "стр. 2, оф. 503", "+7-495-726 65 85"],
  ["Казахстан, 050062, Алматы", "ул. Сайран, 14", "+7 /727/ 266 53 91"],
];

const Lines = ({ items }: { items: string[] }) => (
  <>
    {items.map((line, i) => (
      <React.Fragment key={line}>
        {i > 0 && <br />}
        {line}
      </React.Fragment>
    ))}
  </>
);

export default function App() {
  return (
    <>
      <GlobalStyle />
      <Header id="top">
        <HeaderShape width="600" height="140" viewBox="0 0 600 140" aria-hidden="true">
          <defs>
            <linearGradient id="shade" gradientUnits="userSpaceOnUse" x1="0" y1="0" x2="600" y2="0">
              <stop offset="0.140" stopColor="#1b1a1e" />
              <stop offset="0.300" stopColor="#1d1e21" />
              <stop offset="0.470" stopColor="#363439" />
              <stop offset="0.600" stopColor="#464344" />
              <stop offset="1" stopColor="#5c5b5f" />
            </linearGradient>
          </defs>
          <path d="M22 0H600V60H415Q378 60 358 75L296 122Q272 140 240 140Q207 140 181 121Z" fill="url(#shade)" />
        </HeaderShape>
        <HeaderRow>
          <LogoLink href="#top"><LogoDrawing /></LogoLink>
          <Nav>
            <NavList>
              {navItems.map((item) => (
                <li key={item.text}>
                  <NavLink href="#" $active={item.active}>
                    {item.text}
                    {item.menu && <Caret />}
                  </NavLink>
                </li>
              ))}
            </NavList>
          </Nav>
          <SearchForm>
            <SearchInput type="search" placeholder="Поиск" aria-label="Поиск" />
            <SearchButton type="button" aria-label="Найти">
              <svg width="18" height="20" viewBox="0 0 18 20">
                <circle cx="8" cy="7" r="4.800" fill="none" stroke="#c6c8ca" strokeWidth="2.400" />
                <path d="M11 12L13.500 16" stroke="#c6c8ca" strokeWidth="4.500" strokeLinecap="round" />
              </svg>
            </SearchButton>
          </SearchForm>
        </HeaderRow>
      </Header>
      <Container as="nav" aria-label="Навигация">
        <Crumbs>
          <Crumb><CrumbLink href="#">Главная</CrumbLink></Crumb>
          <Crumb aria-hidden="true">&gt;</Crumb>
          <Crumb><CrumbLink href="#">Контакты</CrumbLink></Crumb>
          <Crumb aria-hidden="true">&gt;</Crumb>
          <Crumb $muted>Контакты</Crumb>
        </Crumbs>
      </Container>
      <main>
        <TitleBlock>
          <TitleIcon width="80" height="80" viewBox="0 0 80 80" aria-hidden="true">
            <circle cx="40" cy="39.500" r="39.800" fill="#f7ac00" />
            <g fill="none" stroke="#fff" strokeLinejoin="round">
              <path d="M35 48L21.500 41L12 57L25.500 64.500L35 48M25.500 64.500L48 56.500L57 41L45.500 45M57 41L70.500 48L61 64L48 56.500" strokeWidth="1.800" />
              <path d="M40.500 52.500C37 44 26 34 26 24A14.700 14.700 0 0 1 55.500 24C55.500 34 44 44 40.500 52.500Z" strokeWidth="3.200" fill="#f7ac00" />
              <circle cx="40.500" cy="23.500" r="5.700" strokeWidth="3.200" />
            </g>
          </TitleIcon>
          <Title>Контакты</Title>
        </TitleBlock>
        <Offices>
          {offices.map((o) => (
            <section key={o.city}>
              <City $current={o.current}>{o.current ? o.city : <CityLink href="#">{o.city}</CityLink>}</City>
              <ContactRow>
                <ContactIcon><PinIcon /></ContactIcon>
                <span><Lines items={o.address} /></span>
              </ContactRow>
              <ContactRow>
                <ContactIcon><FaPhoneAlt size={12} /></ContactIcon>
                <span>{o.phone}</span>
              </ContactRow>
              <ContactRow>
                <ContactIcon><MailIcon /></ContactIcon>
                <Underlined href={`mailto:${o.mail}`}>{o.mail}</Underlined>
              </ContactRow>
            </section>
          ))}
        </Offices>
        <MapBox>
          <MapDrawing />
          <Pin width="36" height="47" viewBox="0 0 36 47" aria-hidden="true">
            <defs>
              <linearGradient id="pin" x1="0" y1="0" x2="0" y2="1">
                <stop offset="0" stopColor="#56555a" />
                <stop offset="0.700" stopColor="#0b0b0c" />
                <stop offset="1" stopColor="#000" />
              </linearGradient>
            </defs>
            <path d="M18 0A18 18 0 0 0 0 18C0 27 9 34 14 44Q18 49 22 44C27 34 36 27 36 18A18 18 0 0 0 18 0Z" fill="url(#pin)" />
            <path d="M7.500 15.500L18 27L28.500 15.500" fill="none" stroke="#fff" strokeWidth="4.600" strokeLinecap="round" strokeLinejoin="round" />
            <path d="M11.500 9H24.500L18 18Z" fill="#f7ac00" />
          </Pin>
          <ZoomBar>
            <ToolButton type="button" $small aria-label="Отдалить">
              <svg width="13" height="13" viewBox="0 0 13 13"><path d="M0 6.500H13" stroke="#444" strokeWidth="3" /></svg>
            </ToolButton>
            <ZoomRange type="range" min="0" max="17" defaultValue="15" aria-label="Масштаб" />
            <ToolButton type="button" $small aria-label="Приблизить">
              <svg width="13" height="13" viewBox="0 0 13 13"><path d="M0 6.500H13M6.500 0V13" stroke="#444" strokeWidth="3" /></svg>
            </ToolButton>
          </ZoomBar>
          <Tools>
            <ToolButton type="button" $on aria-label="Переместить карту">
              <svg width="18" height="19" viewBox="0 0 18 19">
                <path d="M5 17.500V15L1.500 10.500Q.5 8.500 2.500 8.500L4.500 10.500L3 5Q3 3 4.800 3.500L6.500 8L6.300 2.500Q7 .8 8.500 2L9.300 7.500L10.300 2.500Q11.500 1.200 12.500 3L12.200 8L14 5Q15.700 4.200 16 6L15 12L13.500 15.500V17.500Z" fill="#fff" stroke="#333" strokeLinejoin="round" />
              </svg>
            </ToolButton>
            <ToolButton type="button" aria-label="Выделить область">
              <svg width="20" height="20" viewBox="0 0 20 20">
                <rect x="2.500" y="1.500" width="15" height="16" fill="none" stroke="#555" strokeDasharray="2 1.500" />
                <circle cx="9.500" cy="9" r="5" fill="#cfe4fa" stroke="#7f9fc4" strokeWidth="1.500" />
                <path d="M13 13L17.500 17.500" stroke="#8b6a3c" strokeWidth="2.500" strokeLinecap="round" />
              </svg>
            </ToolButton>
            <ToolButton type="button" aria-label="Измерить расстояние">
              <svg width="18" height="18" viewBox="0 0 18 18">
                <path d="M1.500 12.500L12.500 1.500L16.500 5.500L5.500 16.500Z" fill="#f8dc86" stroke="#3b3324" />
                <path d="M4 10L5.500 11.500M6.500 7.500L9 10M9 5L10.500 6.500M11.500 2.500L13.500 4.500" stroke="#3b3324" />
              </svg>
            </ToolButton>
          </Tools>
          <LayerPicker>
            <LayerSelect aria-label="Вид карты" defaultValue="Схема">
              <option>Схема</option>
            </LayerSelect>
            <LayerCaret />
          </LayerPicker>
          <MapCredits>
            <Yandex href="#"><RedLetter>Я</RedLetter>ндекс</Yandex>
            <CreditLine>
              <CreditText>© Яндекс</CreditText>
              <CreditText>
                <a href="#">Ошибка на карте?</a> · <a href="#">Условия использования</a>
              </CreditText>
            </CreditLine>
          </MapCredits>
        </MapBox>
        <Requisites>
          <ArrowLabel>Реквизиты<br />ООО «ТД Технотрейд»</ArrowLabel>
          {requisites.map((lines) => (
            <RequisiteText key={lines[0]}><Lines items={lines} /></RequisiteText>
          ))}
        </Requisites>
      </main>
      <Footer>
        <FooterGrid>
          <div>
            <Copyright><span>© 2015</span><span>ООО «ТД Технотрейд»</span></Copyright>
            <UpLink href="#top">
              <svg width="34" height="16" viewBox="0 0 34 16" aria-hidden="true">
                <path d="M1 13L17 2L33 13" fill="none" stroke="#fff" strokeWidth="2" />
              </svg>
              Вверх
            </UpLink>
          </div>
          {footerColumns.map((lines) => (
            <FooterColumn key={lines[0]}><p><Lines items={lines} /></p></FooterColumn>
          ))}
        </FooterGrid>
      </Footer>
    </>
  );
}
